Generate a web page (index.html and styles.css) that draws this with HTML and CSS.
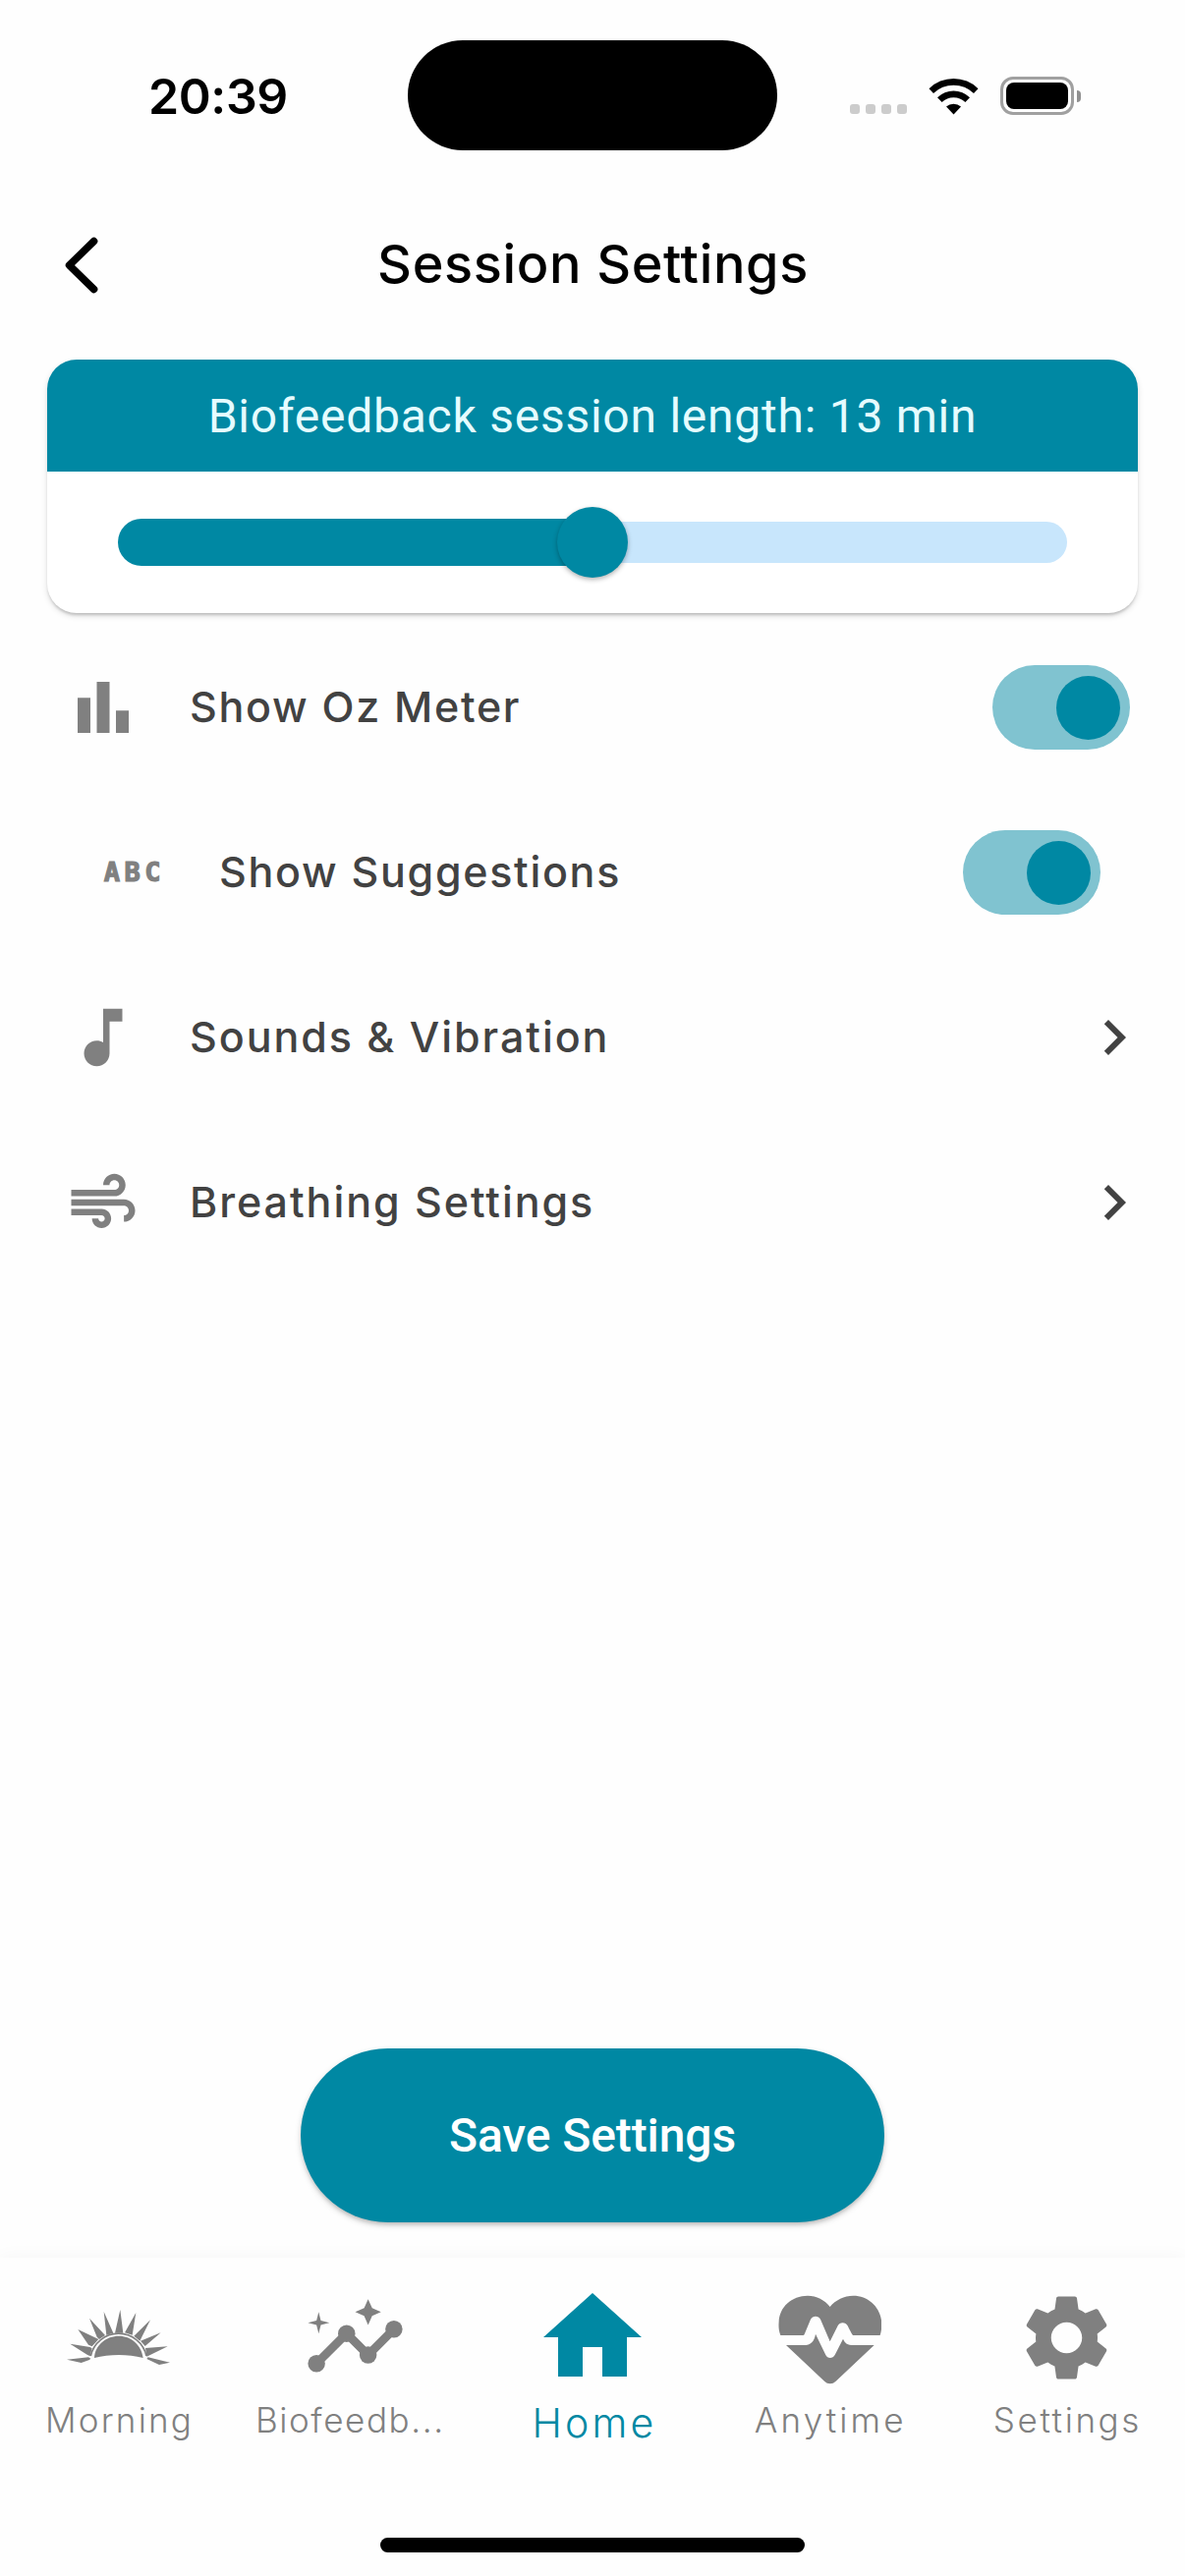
FILE: index.html
```html
<!DOCTYPE html>
<html lang="en">
<head>
<meta charset="utf-8">
<title>Session Settings</title>
<link rel="stylesheet" href="styles.css">
</head>
<body>
<div class="screen">
  <header class="status-bar">
    <div class="status-time">20:39</div>
    <div class="island"></div>
    <div class="status-icons">
      <div class="signal"><i></i><i></i><i></i><i></i></div>
      <svg class="wifi" viewBox="0 0 51 38">
        <path d="M0.5 11.2 A35.5 35.5 0 0 1 50.5 11.2 L46 16 A29.3 29.3 0 0 0 5 16 Z"/>
        <path d="M9 20.2 A23.4 23.4 0 0 1 42 20.2 L37.4 25 A17 17 0 0 0 13.6 25 Z"/>
        <path d="M18 29.6 A11 11 0 0 1 33 29.6 L25.5 37.5 Z"/>
      </svg>
      <div class="battery"><div class="battery-case"><div class="battery-level"></div></div><div class="battery-nub"></div></div>
    </div>
  </header>

  <div class="title-bar">
    <svg class="back" viewBox="0 0 34 58"><path d="M29.6 4.5 L4.5 29 L29.6 53.5"/></svg>
    <h1 class="title">Session Settings</h1>
  </div>

  <section class="card">
    <div class="card-head">Biofeedback session length: 13 min</div>
    <div class="card-body">
      <div class="slider">
        <div class="slider-active"></div>
        <div class="slider-rest"></div>
        <div class="slider-thumb"></div>
      </div>
    </div>
  </section>

  <main class="rows">
    <div class="row">
      <svg class="row-icon" viewBox="0 0 24 24"><path d="M4 9h4v11H4zM16 13h4v7h-4zM10 4h4v16h-4z"/></svg>
      <span class="row-label">Show Oz Meter</span>
      <div class="toggle"><div class="toggle-thumb"></div></div>
    </div>
    <div class="row row-inset">
      <span class="row-icon abc">ABC</span>
      <span class="row-label">Show Suggestions</span>
      <div class="toggle"><div class="toggle-thumb"></div></div>
    </div>
    <div class="row">
      <svg class="row-icon" viewBox="0 0 24 24"><path d="M12 3v10.55c-.59-.34-1.27-.55-2-.55-2.21 0-4 1.79-4 4s1.79 4 4 4 4-1.79 4-4V7h4V3h-6z"/></svg>
      <span class="row-label row-label-wide">Sounds &amp; Vibration</span>
      <svg class="chevron" viewBox="0 0 24 24"><path d="M8.59 16.59L13.17 12 8.59 7.41 10 6l6 6-6 6z"/></svg>
    </div>
    <div class="row">
      <svg class="row-icon" viewBox="0 0 24 24"><path d="M14.5 17c0 1.65-1.35 3-3 3s-3-1.35-3-3h2c0 .55.45 1 1 1s1-.45 1-1-.45-1-1-1H2v-2h9.5c1.65 0 3 1.35 3 3zM19 6.5C19 4.57 17.43 3 15.5 3S12 4.57 12 6.5h2c0-.83.67-1.5 1.5-1.5s1.5.67 1.5 1.5S16.33 8 15.5 8H2v2h13.5c1.93 0 3.5-1.57 3.5-3.5zM18.5 11H2v2h16.5c.83 0 1.5.67 1.5 1.5s-.67 1.5-1.5 1.5v2c1.93 0 3.5-1.57 3.5-3.5S20.43 11 18.5 11z"/></svg>
      <span class="row-label row-label-wide">Breathing Settings</span>
      <svg class="chevron" viewBox="0 0 24 24"><path d="M8.59 16.59L13.17 12 8.59 7.41 10 6l6 6-6 6z"/></svg>
    </div>
  </main>

  <button class="save">Save Settings</button>

  <nav class="tabs">
    <div class="tab">
      <svg class="tab-icon" viewBox="204 141 315 315">
        <path d="M288 360C290 320 325 293 363 293C400 293 432 320 437 360C390 348 335 348 288 360Z"/>
        <path d="M204 365L270 358L277 362L273 366L248 375ZM214 317L275 327L281 331L275 355L266 350ZM238 273L301 303L281 325L270 320ZM273 239L321 291L303 303L296 296ZM317 219L346 284L325 291ZM367 213L376 284L351 284ZM415 222L404 290L381 283ZM459 244L427 308L409 293ZM491 283L443 324L429 308ZM512 325L448 356L444 330ZM519 374L486 381L448 363L452 358Z"/>
        <path class="rim" d="M277 354A87 87 0 0 1 447 354"/>
      </svg>
      <span class="tab-label morning">Morning</span>
    </div>
    <div class="tab">
      <svg class="tab-icon" viewBox="0 0 24 24">
        <path class="line" d="M3 18L10 11L15 16L21 10"/>
        <circle cx="3" cy="18" r="2"/><circle cx="10" cy="11" r="2"/><circle cx="15" cy="16" r="2"/><circle cx="21" cy="10" r="2"/>
        <path d="M15 9l.94-2.07L18 6l-2.06-.93L15 3l-.92 2.07L12 6l2.08.93zM3.5 11L4 9l2-.5L4 8l-.5-2L3 8l-2 .5L3 9z"/>
      </svg>
      <span class="tab-label biofeedback">Biofeedb...</span>
    </div>
    <div class="tab tab-active">
      <svg class="tab-icon" viewBox="0 0 24 24"><path d="M10 20v-6h4v6h5v-8h3L12 3 2 12h3v8z"/></svg>
      <span class="tab-label">Home</span>
    </div>
    <div class="tab">
      <svg class="tab-icon" viewBox="155 141 315 315">
        <path d="M162 291C156 275 156 262 157 250C158 205 196 170 245 170C272 170 297 183 313 204C330 183 357 170 384 170C432 170 471 208 471 258C471 270 469 281 466 291H383C378 285 373 274 367 262C361 250 343 249 337 262L313 310L284 242C278 230 260 230 254 242L235 288C234 290 233 291 231 291Z"/>
        <path d="M179 321H232C255 321 265 310 269 287L300 351C305 363 322 363 328 351L353 302C359 316 367 321 384 321H448L331 431C321 441 306 441 296 431Z"/>
      </svg>
      <span class="tab-label anytime">Anytime</span>
    </div>
    <div class="tab">
      <svg class="tab-icon" viewBox="0 0 24 24"><path d="M19.14 12.94c.04-.3.06-.61.06-.94 0-.32-.02-.64-.07-.94l2.03-1.58c.18-.14.23-.41.12-.61l-1.92-3.32c-.12-.22-.37-.29-.59-.22l-2.39.96c-.5-.38-1.03-.7-1.62-.94L14.4 2.81c-.04-.24-.24-.41-.48-.41h-3.84c-.24 0-.43.17-.47.41L9.25 5.35c-.59.24-1.13.57-1.62.94L5.24 5.33c-.22-.08-.47 0-.59.22L2.74 8.87c-.12.21-.08.47.12.61l2.03 1.58c-.05.3-.09.63-.09.94s.02.64.07.94l-2.03 1.58c-.18.14-.23.41-.12.61l1.92 3.32c.12.22.37.29.59.22l2.39-.96c.5.38 1.03.7 1.62.94l.36 2.54c.05.24.24.41.48.41h3.84c.24 0 .44-.17.47-.41l.36-2.54c.59-.24 1.13-.56 1.62-.94l2.39.96c.22.08.47 0 .59-.22l1.92-3.32c.12-.22.07-.47-.12-.61zM12 15.6c-1.98 0-3.6-1.62-3.6-3.6s1.62-3.6 3.6-3.6 3.6 1.62 3.6 3.6-1.62 3.6-3.6 3.6z"/></svg>
      <span class="tab-label">Settings</span>
    </div>
  </nav>
  <div class="home-indicator"></div>
</div>
</body>
</html>
```
FILE: styles.css
```css
* { box-sizing: border-box; }
body { margin: 0; background: #fff; }
.screen {
  width: 1206px;
  height: 2622px;
  display: flex;
  flex-direction: column;
  background: #fefefe;
  font-family: Inter, "Liberation Sans", sans-serif;
  color: #424242;
  overflow: hidden;
}
svg { display: block; fill: currentColor; flex: none; }

.status-bar {
  height: 194px;
  flex: none;
  display: grid;
  grid-template-columns: 415px 376px 415px;
  color: #000;
}
.status-time {
  padding: 68px 0 0 151px;
  font-size: 50px;
  line-height: 60px;
  font-weight: 600;
  letter-spacing: -.4px;
}
.island {
  margin-top: 41px;
  height: 112px;
  border-radius: 56px;
  background: #000;
}
.status-icons { display: flex; padding: 78px 0 0 74px; height: 117px; }
.signal { display: flex; gap: 6px; align-items: flex-end; margin: 0 22px 1px 0; }
.signal i { width: 10px; height: 10px; border-radius: 3px; background: #ccc; }
.wifi { width: 51px; height: 38px; margin-top: 1px; }
.battery { display: flex; align-items: center; gap: 3px; margin-left: 22px; }
.battery-case { width: 75px; height: 39px; padding: 3px; border: 3px solid #a0a0a0; border-radius: 13px; }
.battery-level { height: 27px; border-radius: 8px; background: #000; }
.battery-nub { width: 4px; height: 12px; border-radius: 0 4px 4px 0; background: #909090; }

.title-bar {
  height: 172px;
  flex: none;
  display: grid;
  grid-template-columns: 134px 1fr 134px;
  color: #000;
}
.back { width: 34px; height: 58px; margin: 47px 0 0 66px; fill: none; stroke: currentColor; stroke-width: 7.5; stroke-linecap: round; stroke-linejoin: round; }
.title { margin: 43px 0 0; padding-left: 1px; font-size: 54px; line-height: 64px; font-weight: 500; letter-spacing: .65px; text-align: center; white-space: nowrap; }

.card {
  margin: 0 48px;
  height: 258px;
  flex: none;
  border-radius: 30px;
  background: #fff;
  box-shadow: 0 3px 3px -1px rgba(0,0,0,.18), 0 3px 6px rgba(0,0,0,.12);
}
.card-head {
  height: 114px;
  border-radius: 30px 30px 0 0;
  background: #0088a3;
  color: #e5fcff;
  font: 400 48px/116px Roboto, sans-serif;
  letter-spacing: .75px;
  text-align: center;
  white-space: nowrap;
}
.card-body { padding: 36px 72px; }
.slider { position: relative; display: flex; align-items: center; height: 72px; }
.slider-active { width: 483px; height: 48px; border-radius: 24px 0 0 24px; background: #0088a3; }
.slider-rest { width: 483px; height: 42px; border-radius: 0 21px 21px 0; background: #c8e6fc; }
.slider-thumb { position: absolute; left: 447px; top: 0; width: 72px; height: 72px; border-radius: 50%; background: #0088a3; box-shadow: 0 2px 5px rgba(0,0,0,.3); }

.rows { padding-top: 12px; }
.row { height: 168px; display: flex; align-items: center; padding: 0 36px 0 66px; }
.row-inset { padding: 0 66px 0 96px; }
.row-icon { width: 78px; height: 78px; color: #808080; flex: none; }
.abc { font: 700 27px/78px "DejaVu Sans Mono", monospace; text-align: center; letter-spacing: 4.5px; padding-left: 4px; -webkit-text-stroke: 1.2px #808080; }
.row-label { flex: 1; padding: 0 0 2px 49px; font-size: 43px; line-height: 50px; font-weight: 500; letter-spacing: 1.7px; white-space: nowrap; }
.row-label-wide { letter-spacing: 1.95px; }
.toggle { width: 140px; height: 86px; border-radius: 43px; background: #80c3d0; display: flex; align-items: center; justify-content: flex-end; padding-right: 10.5px; margin-right: 20px; }
.toggle-thumb { width: 65px; height: 65px; border-radius: 50%; background: #0088a3; }
.chevron { width: 72px; height: 72px; }

.save {
  width: 594px;
  height: 177px;
  flex: none;
  margin: 777px auto 0;
  border: 0;
  padding: 0;
  border-radius: 89px;
  background: #0088a3;
  color: #fff;
  font: 500 48px/177px Roboto, sans-serif;
  letter-spacing: -.1px;
  box-shadow: 0 3px 4px -1px rgba(0,0,0,.18), 0 3px 7px rgba(0,0,0,.14);
}

.tabs {
  margin-top: 36px;
  height: 285px;
  flex: none;
  display: grid;
  grid-template-columns: repeat(5, 1fr);
  background: #fefefe;
  box-shadow: 0 0 18px rgba(0,0,0,.04);
  clip-path: inset(-20px 0 0 0);
}
.tab { display: flex; flex-direction: column; align-items: center; color: #808080; padding-top: 29px; }
.tab-icon { width: 105px; height: 105px; }
.tab-label { font-size: 35px; line-height: 42px; font-weight: 300; margin: 10px -2px 0 0; letter-spacing: 2.6px; white-space: nowrap; }
.morning { letter-spacing: 2.2px; }
.biofeedback { letter-spacing: 1.6px; margin-right: 11px; }
.anytime { letter-spacing: 3.1px; }
.line, .rim { fill: none; stroke: currentColor; stroke-width: 2; }
.rim { stroke-width: 5; }
.tab-active { color: #0088a3; padding-top: 21px; }
.tab-active .tab-icon { width: 120px; height: 120px; }
.tab-active .tab-label { font-size: 41px; line-height: 48px; margin: 3px -4px 0 0; letter-spacing: 3.2px; }
.home-indicator { width: 432px; height: 15px; border-radius: 8px; background: #000; margin: 0 auto; flex: none; }
```
